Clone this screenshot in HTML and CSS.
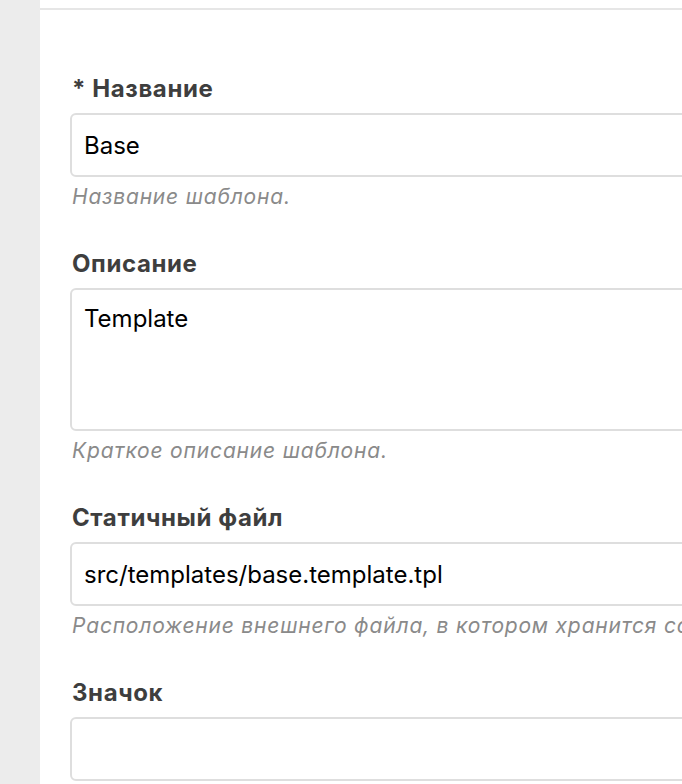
FILE: index.html
```html
<!DOCTYPE html>
<html lang="ru">
<head>
<meta charset="utf-8">
<title>Шаблон</title>
<link rel="stylesheet" href="styles.css">
</head>
<body>
<div class="layout">
  <aside class="sidebar"></aside>
  <main class="panel">
    <div class="panel-head"></div>
    <form class="form">
      <div class="field">
        <label class="label">* Название</label>
        <input class="control" type="text" value="Base">
        <div class="help">Название шаблона.</div>
      </div>
      <div class="field">
        <label class="label">Описание</label>
        <textarea class="control area">Template</textarea>
        <div class="help">Краткое описание шаблона.</div>
      </div>
      <div class="field">
        <label class="label">Статичный файл</label>
        <input class="control" type="text" value="src/templates/base.template.tpl">
        <div class="help">Расположение внешнего файла, в котором хранится содержимое шаблона.</div>
      </div>
      <div class="field">
        <label class="label">Значок</label>
        <input class="control" type="text" value="">
      </div>
    </form>
  </main>
</div>
</body>
</html>
```
FILE: styles.css
```css
html, body {
  margin: 0;
  padding: 0;
  overflow: hidden;
  background: #ececec;
}
body {
  font-family: Inter, "Liberation Sans", sans-serif;
}
.layout {
  display: flex;
  min-height: 784px;
}
.sidebar {
  width: 40px;
  flex: none;
  background: #ececec;
}
.panel {
  flex: none;
  width: 1000px;
  background: #fff;
}
.panel-head {
  height: 8px;
  border-bottom: 2px solid #e6e6e6;
}
.form {
  display: flex;
  flex-direction: column;
  gap: 39px;
  padding: 64px 0 0 30px;
}
.field {
  display: flex;
  flex-direction: column;
}
.label {
  display: block;
  font-size: 24px;
  line-height: 30px;
  font-weight: 700;
  letter-spacing: 0.6px;
  color: #3e3e3e;
  padding-left: 2px;
  margin-bottom: 9px;
}
.control {
  box-sizing: border-box;
  width: 900px;
  height: 64px;
  margin: 0;
  padding: 0 12px;
  border: 2px solid #dedede;
  border-radius: 6px;
  background: #fff;
  font-family: inherit;
  font-size: 24px;
  color: #000;
  outline: none;
}
.area {
  height: 143px;
  padding: 14px 12px;
  line-height: 30px;
  resize: none;
}
.help {
  margin-top: 7px;
  padding-left: 2px;
  font-size: 21px;
  line-height: 26px;
  font-style: italic;
  letter-spacing: 0.8px;
  color: #8a8a8a;
  white-space: nowrap;
}
```
